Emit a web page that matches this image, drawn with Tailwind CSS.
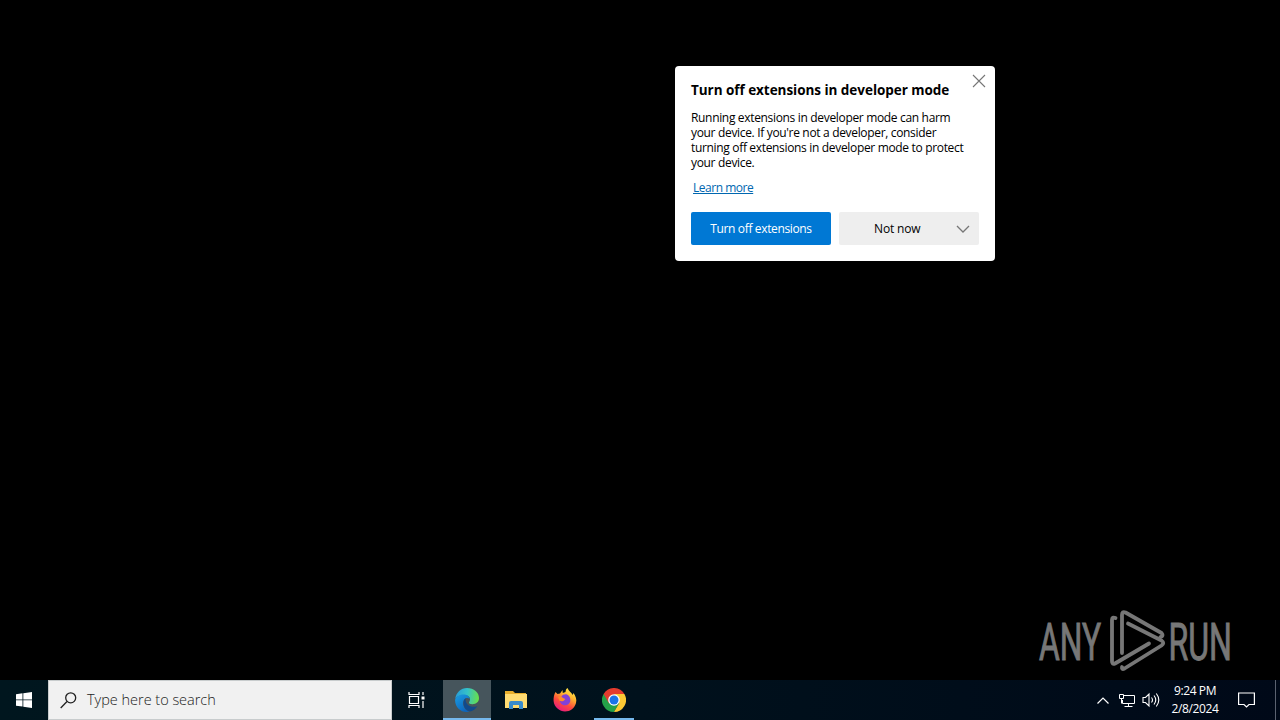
<!DOCTYPE html>
<html lang="en">
<head>
    <meta charset="UTF-8">
    <meta name="viewport" content="width=device-width, initial-scale=1.0">
    <title>Desktop</title>
    <script src="https://cdn.jsdelivr.net/npm/@tailwindcss/browser@4"></script>
</head>
<body class="bg-black font-['Open_Sans',sans-serif] overflow-hidden">
    <div class="relative w-[1280px] h-[720px] flex flex-col justify-end bg-black overflow-hidden">

        <!-- Extensions prompt -->
        <div class="absolute left-[675px] top-[66px] w-[320px] h-[195px] bg-white rounded px-4 pt-[15px] text-black">
            <button class="absolute right-[9px] top-2">
                <svg class="block" width="14" height="14" viewBox="0 0 14 14" stroke="#767676" stroke-width="1.1"><path d="M1 1l12 12M13 1L1 13"/></svg>
            </button>
            <h2 class="text-[13.5px] leading-[18px] font-bold whitespace-nowrap tracking-[-0.04px]">Turn off extensions in developer mode</h2>
            <p class="mt-[11px] text-[12px] leading-[15px] whitespace-nowrap tracking-[-0.33px]">Running extensions in developer mode can harm<br>your device. If you're not a developer, consider<br>turning off extensions in developer mode to protect<br>your device.</p>
            <a href="#" class="block w-fit ml-[2px] mt-[10px] text-[12px] leading-[15px] text-[#0067b0] underline tracking-[-0.48px]">Learn more</a>
            <div class="flex gap-2 mt-[17px] text-[12px]">
                <button class="w-[140px] h-[33px] bg-[#0078d4] text-white rounded-xs tracking-[-0.36px]">Turn off extensions</button>
                <button class="w-[140px] h-[33px] bg-[#eeeeee] rounded-xs flex items-center justify-between pl-[35px] pr-[9px] tracking-[-0.15px]">
                    <span>Not now</span>
                    <svg width="14" height="8" viewBox="0 0 14 8" fill="none" stroke="#767676" stroke-width="1.3"><path d="M1 1l6 6 6-6"/></svg>
                </button>
            </div>
        </div>

        <!-- Watermark -->
        <svg class="absolute left-[1030px] top-[602px]" width="220" height="76" viewBox="1030 602 220 76" fill="none">
            <g class="font-[Roboto] font-normal" fill="#777" stroke="#777" stroke-width="1" font-size="52">
                <text x="1039" y="659.500" textLength="62" lengthAdjust="spacingAndGlyphs">ANY</text>
                <text x="1168.500" y="659.500" textLength="63.500" lengthAdjust="spacingAndGlyphs">RUN</text>
            </g>
            <g stroke="#777" stroke-width="3.800" stroke-linejoin="round" stroke-linecap="round">
                <path d="M1115.500 618q-3.500-1.500-3.500 2v41q0 4 3 2.500l34-20"/>
                <path d="M1122 653v-38q0-4 3.500-2.500l36 20.500q2.500 3-1 4"/>
                <path d="M1128 623.500l33.500 17q3.500 2.500 0 5l-37 23q-3 1.500-2.500-1.500"/>
            </g>
        </svg>

        <!-- Taskbar -->
        <footer class="h-10 w-full flex items-stretch bg-linear-to-r from-[#00161e] via-[#00111c] to-[#000918] text-white">
            <div class="w-12 flex items-center justify-center">
                <svg width="16" height="16" viewBox="0 0 16 16" fill="#fff"><path d="M0 2.2L6.5 1.3V7.5H0zM7.3 1.2L16 0V7.5H7.3zM0 8.3h6.5v6.3L0 13.7zM7.3 8.3H16V16L7.3 14.8z"/></svg>
            </div>
            <div class="w-[344px] bg-[#f1f1f1] border border-[#c8cccd] flex items-center pl-[11px] text-[#222]">
                <svg width="17" height="17" viewBox="0 0 17 17" fill="none" stroke="#222" stroke-width="1.3"><circle cx="10.7" cy="5.8" r="5"/><path d="M7 9.5L.7 16"/></svg>
                <span class="ml-[10px] text-[14.5px] font-[350] tracking-[-0.02px]">Type here to search</span>
            </div>
            <div class="w-[51px] flex items-center justify-center pr-[3px]">
                <svg width="17" height="16" viewBox="0 0 17 16" fill="none" stroke="#fff" stroke-width="1.2"><path d="M1 0v2.5h10V0M1 16v-2.5h10V16M1.500 4.500h9v7h-9zM15 0v3M15 9v7"/><path d="M13.500 4.500h3v3h-3z" fill="#fff" stroke="none"/></svg>
            </div>
            <div class="w-12 bg-[#46555c] border-b-2 border-[#76b9ed] flex items-center justify-center pt-[2px]">
                <svg width="24" height="24" viewBox="0 0 24 24">
                    <defs>
                        <linearGradient id="edgeTop" x1="0" y1=".3" x2="1" y2=".4"><stop offset="0" stop-color="#279bd9"/><stop offset=".5" stop-color="#35c1c8"/><stop offset="1" stop-color="#67e04b"/></linearGradient>
                        <linearGradient id="edgeLeft" x1="0" y1="0" x2=".6" y2="1"><stop offset="0" stop-color="#1b9de2"/><stop offset="1" stop-color="#0c65bd"/></linearGradient>
                    </defs>
                    <path d="M.2 11C1 4.500 6 0 12 0c7 0 12 4.500 12 10 0 4-3 6.200-6.500 6.200-3 0-4.200-1-3.300-2.200 2.500-4-.7-7-5-7C4.700 7 1 9 .2 11z" fill="url(#edgeTop)"/>
                    <path d="M.1 12C.3 9 4 6.500 8.500 6.500c3.500 0 6 2 6.200 4.500-1-1-2.500-1.300-4-.7C6 13 8 22.500 15 23.600 7 25.500 0 20 .1 12z" fill="url(#edgeLeft)"/>
                    <path d="M10.700 10.300C7 12 7.500 22 15 23.600c3.500-.8 6-3 7.400-5.600-4.500 2.200-12.700.3-11.700-7.700z" fill="#114a8b"/>
                </svg>
            </div>
            <div class="w-[49px] flex items-center justify-center">
                <svg width="22" height="18" viewBox="0 0 22 18"><path d="M0 0h8l2 2h11v15H0z" fill="#e8ae2c"/><path d="M0 3h22v14H0z" fill="#ffdc72"/><path d="M4 18v-6q0-2 2-2h10q2 0 2 2v6h-4v-4H8v4z" fill="#398bcb"/></svg>
            </div>
            <div class="w-[49px] flex items-center justify-center">
                <svg width="24" height="24" viewBox="0 0 24 24">
                    <defs><linearGradient id="fox" x1=".8" y1="0" x2=".25" y2="1"><stop offset="0" stop-color="#fff44f"/><stop offset=".35" stop-color="#ffb02e"/><stop offset=".65" stop-color="#ff4a3d"/><stop offset="1" stop-color="#e31587"/></linearGradient></defs>
                    <path d="M2.500 4l2 2L7 5.500l2.500-3.500.3 3 2.700-1c.2-2 .7-3.200 2-4 1 3 4 4.500 5.200 7l.8-2C22.500 8 24 11 23 15c-1.300 5-5.800 8.500-11 8.500S1 19 .6 13C.4 9.500 1 6.500 2.500 4z" fill="url(#fox)"/>
                    <path d="M8.500 8.500c1-1.500 3-2.500 5.500-2 2.200 1 3.500 3.300 3.300 6-.2 2.800-2.500 4.800-5.300 4.800s-5-2-5-4.500c1.500 1 3.500.3 4.500-.8-1.300-.5-2.700-1.500-3-3.500z" fill="#8141d8"/>
                    <path d="M5 9l4 .3 2 1.200 1.500.5-1.500 1.300c-1.500 1.600-3 .8-4.500.4z" fill="#ff8b2c"/>
                </svg>
            </div>
            <div class="w-[49px] flex justify-center">
                <div class="w-10 border-b-2 border-[#76b9ed] flex items-center justify-center pt-[2px]">
                    <svg width="24" height="24" viewBox="0 0 24 24">
                        <path d="M1.600 6A12 12 0 0 0 12 24l5.200-9L12 12z" fill="#24a148"/>
                        <path d="M22.400 6A12 12 0 0 1 12 24l5.200-9L12 6z" fill="#fcc934"/>
                        <path d="M1.600 6l5.200 9L12 6h10.400A12 12 0 0 0 1.600 6z" fill="#e33b2e"/>
                        <circle cx="12" cy="12" r="5.800" fill="#fff"/><circle cx="12" cy="12" r="4.500" fill="#1a73e8"/>
                    </svg>
                </div>
            </div>

            <!-- Tray -->
            <div class="ml-auto flex items-center">
                <svg width="12" height="7" viewBox="0 0 12 7" fill="none" stroke="#fff" stroke-width="1.2"><path d="M.5 6.500L6 1l5.500 5.500"/></svg>
                <svg class="ml-[9px]" width="18" height="15" viewBox="0 0 18 15" fill="none" stroke="#fff"><path d="M6 2.500h10.500v8H4.500V7M10.500 10.500v3M6.500 13.500h8M1.500 1.500h4v4h-4zM3.500 5.500v5"/></svg>
                <svg class="ml-[6px]" width="18" height="16" viewBox="0 0 18 16" fill="none" stroke="#fff" stroke-width="1.100"><path d="M1 5.500h2.500L7 2v12L3.500 10.500H1zM9.500 5.500q2 2.500 0 5M12 3.500q3.500 4.500 0 9M14.300 1.500q5 6.500 0 13"/></svg>
                <div class="w-[70px] text-center text-[12px] leading-[18px] tracking-[-0.4px]">9:24 PM<br>2/8/2024</div>
                <svg class="ml-[8px] mr-[20px]" width="17" height="16" viewBox="0 0 17 16" fill="none" stroke="#fff" stroke-width="1.200"><path d="M.6 1h15.800v11.500h-5.400L8.500 15 6 12.500H.6z"/></svg>
                <div class="w-px h-10 mr-1 bg-[#5b6270]"></div>
            </div>
        </footer>
    </div>
</body>
</html>
